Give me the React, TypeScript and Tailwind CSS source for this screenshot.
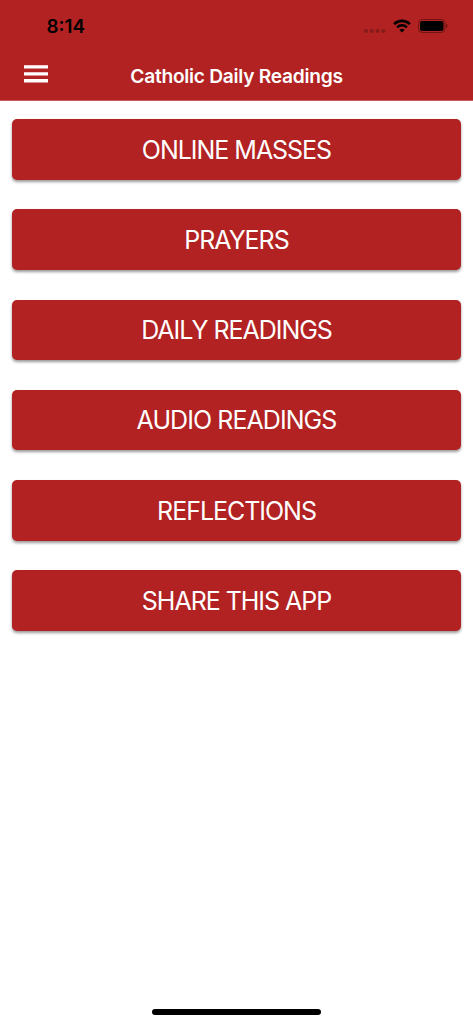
const menu = [
  { label: "ONLINE MASSES", tracking: "tracking-[-1.03px]" },
  { label: "PRAYERS", tracking: "tracking-[-1.03px]" },
  { label: "DAILY READINGS", tracking: "tracking-[-1.03px]" },
  { label: "AUDIO READINGS", tracking: "tracking-[-0.93px]" },
  { label: "REFLECTIONS", tracking: "tracking-[-1.03px]" },
  { label: "SHARE THIS APP", tracking: "tracking-[-1.03px]" },
];

const StatusBar = () => {
  return (
    <div className="flex h-[51px] items-center justify-between pl-[46.5px] pr-[25px] pt-[2px] text-black">
      <span className="pt-[1.5px] text-[18.8px] font-semibold leading-none">8:14</span>
      <div className="flex items-center pb-px">
        <svg width="22" height="4" viewBox="0 0 22 4" className="mt-[9px]" fill="#851a1a">
          <circle cx="2" cy="2" r="2" />
          <circle cx="7.8" cy="2" r="2" />
          <circle cx="13.6" cy="2" r="2" />
          <circle cx="19.4" cy="2" r="2" />
        </svg>
        <svg width="18" height="14" viewBox="0 0 18 14" className="ml-[7px]" fill="none" stroke="#000">
          <path d="M1.1 5.1a11.3 11.3 0 0 1 15.8 0" strokeWidth="2.6" />
          <path d="M4.1 8.3a7 7 0 0 1 9.8 0" strokeWidth="2.5" />
          <path d="M9 13.5 6.4 10.9a3.8 3.8 0 0 1 5.2 0Z" fill="#000" stroke="none" />
        </svg>
        <svg width="30" height="14" viewBox="0 0 30 14" className="ml-[7px]">
          <rect x="0.5" y="0.5" width="26.5" height="13" rx="3.8" fill="none" stroke="#701515" />
          <rect x="2" y="2" width="23.5" height="10" rx="2.3" fill="#000" />
          <path d="M28.3 4.8c1.7.7 1.7 3.7 0 4.4Z" fill="#5c1111" />
        </svg>
      </div>
    </div>
  );
};

const Header = () => {
  return (
    <header className="h-[101px] border-b border-[#c85b5d] bg-[#b22222]">
      <StatusBar />
      <div className="grid h-[49px] grid-cols-[1fr_auto_1fr] items-center">
        <button aria-label="Menu" className="ml-[24px] w-[24px] pb-[3px]">
          <svg width="24" height="18" viewBox="0 0 24 18" fill="#fff" className="block">
            <path d="M0 .2h24v3.4H0zM0 7.2h24v3.4H0zM0 14.1h24v3.4H0z" />
          </svg>
        </button>
        <h1 className="pt-[2px] text-[19.2px] font-semibold leading-none tracking-[-0.28px] text-white">
          Catholic Daily Readings
        </h1>
      </div>
    </header>
  );
};

const App = () => {
  return (
    <div className="flex h-screen flex-col overflow-hidden bg-white font-['Inter',sans-serif]">
      <Header />
      <main className="flex flex-1 flex-col gap-[29.65px] px-[11.7px] pt-[18.2px]">
        {menu.map((item) => (
          <button
            key={item.label}
            className="flex h-[60.6px] shrink-0 items-center justify-center rounded-[5px] bg-[#b22222] pt-[1.5px] text-[25px] leading-none text-white shadow-[0_2px_3px_rgba(0,0,0,0.4)]"
          >
            <span className={item.tracking}>{item.label}</span>
          </button>
        ))}
      </main>
      <div className="mx-auto mb-[9px] h-[6px] w-[169px] rounded-full bg-black" />
    </div>
  );
};

export default App;
